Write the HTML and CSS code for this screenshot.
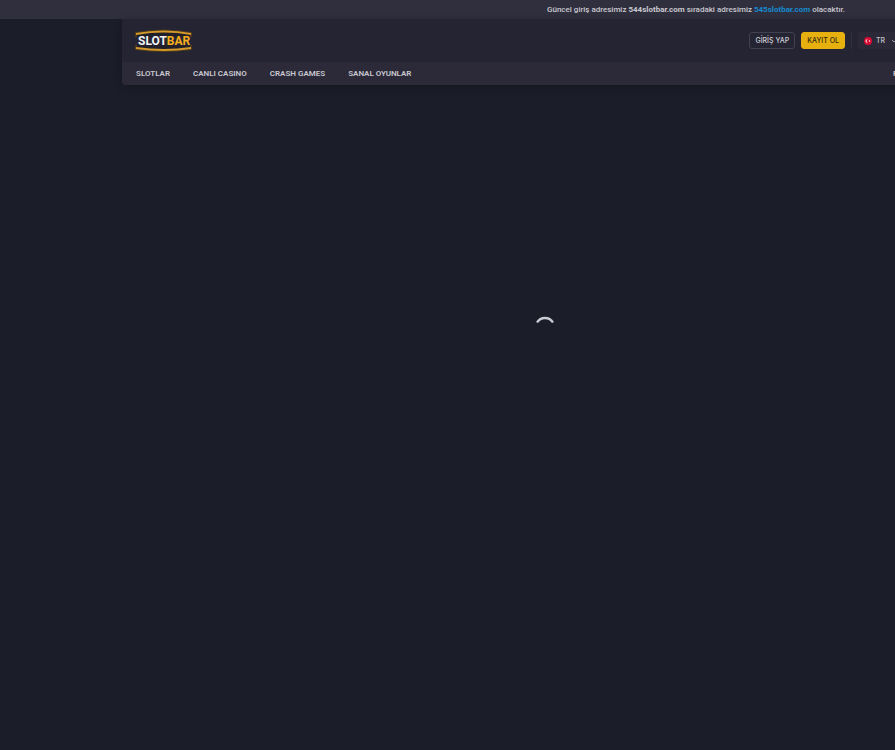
FILE: index.html
```html
<!DOCTYPE html>
<html lang="tr">
<head>
    <meta charset="UTF-8">
    <meta name="viewport" content="width=device-width, initial-scale=1.0">
    <title>Slotbar</title>
    <link rel="stylesheet" href="styles.css">
</head>
<body>
    <div class="page">
        <div class="announcement">
            <p>Güncel giriş adresimiz <strong>544slotbar.com</strong> sıradaki adresimiz <a href="#">545slotbar.com</a> olacaktır.</p>
        </div>

        <header class="header">
            <div class="header-top">
                <a class="logo" href="#" aria-label="Slotbar">
                    <svg width="58" height="24" viewBox="0 0 58 24">
                        <path d="M1 8V4Q29 -1 56 4V8M1 16V20Q29 24 56 20V16" fill="#211f27" stroke="#4d391c" stroke-width="2"/>
                        <path d="M1 5Q29 0 56 5M1 19Q29 23 56 19" fill="none" stroke="#d49a2b" stroke-width="2"/>
                        <text class="logo-text" x="3" y="16"><tspan fill="#f2f2f4">SLOT</tspan><tspan fill="#f7ae1c">BAR</tspan></text>
                    </svg>
                </a>

                <div class="actions">
                    <button class="btn btn-login" type="button">GİRİŞ YAP</button>
                    <button class="btn btn-register" type="button">KAYIT OL</button>
                    <span class="divider"></span>
                    <label class="language">
                        <svg width="8" height="8" viewBox="0 0 16 16">
                            <circle cx="8" cy="8" r="8" fill="#d80b35"/>
                            <path d="M8 4.6A3.6 3.6 0 1 0 8 11.4A2.9 3.4 0 1 1 8 4.6Z" fill="#fff"/>
                            <circle cx="11" cy="8" r="1.3" fill="#fff"/>
                        </svg>
                        <select aria-label="Dil">
                            <option>TR</option>
                        </select>
                        <svg width="6" height="4" viewBox="0 0 6 4">
                            <path d="M1 1L3 3L5 1" fill="none" stroke="#9b9ba5"/>
                        </svg>
                    </label>
                </div>
            </div>

            <nav class="nav">
                <a href="#">SLOTLAR</a>
                <a href="#">CANLI CASINO</a>
                <a href="#">CRASH GAMES</a>
                <a href="#">SANAL OYUNLAR</a>
                <a class="nav-last" href="#">PROMOSYONLAR</a>
            </nav>
        </header>

        <main class="content">
            <svg class="spinner" width="20" height="20" viewBox="0 0 20 20" role="img" aria-label="Yükleniyor">
                <path d="M2 7.5A9.3 9.3 0 0 1 18 7.5" fill="none" stroke="#c9cad2" stroke-width="2.4"/>
            </svg>
        </main>
    </div>
</body>
</html>
```
FILE: styles.css
```css
* {
    box-sizing: border-box;
}

body {
    margin: 0;
    background-color: #1b1d29;
    color: #c9c8d0;
    font-family: Roboto, sans-serif;
    font-size: 8px;
    overflow: hidden;
}

a {
    color: inherit;
    text-decoration: none;
}

/* desktop layout, narrower windows see its left part */
.page {
    display: flex;
    flex-direction: column;
    min-width: 1090px;
    min-height: 100vh;
}

.announcement {
    display: flex;
    justify-content: flex-end;
    align-items: center;
    height: 19px;
    padding-right: 245px;
    background-color: #302f3d;
    font-weight: 500;
}

.announcement p {
    margin: 0;
}

.announcement strong {
    font-weight: 700;
}

.announcement a {
    color: #168bd0;
    font-weight: 700;
}

.header {
    margin: 0 122px;
    background-color: #252432;
    border-radius: 0 0 4px 4px;
    box-shadow: 0 2px 8px rgba(0, 0, 0, 0.25);
    overflow: hidden;
}

.header-top {
    display: flex;
    justify-content: space-between;
    align-items: center;
    height: 43px;
    padding: 0 65px 0 13px;
}

.logo {
    display: flex;
}

.logo-text {
    font-family: Roboto, sans-serif;
    font-size: 12px;
    font-weight: 700;
}

.actions {
    display: flex;
    align-items: center;
    gap: 6px;
}

.btn {
    height: 17px;
    padding: 0 5px;
    border: 1px solid #424150;
    border-radius: 3px;
    background-color: transparent;
    color: #d2d1d8;
    font-family: Inter, sans-serif;
    font-size: 7px;
    font-weight: 500;
    cursor: pointer;
}

.btn-register {
    border-color: #e6b00f;
    background-color: #e6b00f;
    color: #352a10;
}

.divider {
    width: 1px;
    height: 17px;
    background-color: #303040;
}

.language {
    display: flex;
    align-items: center;
    gap: 4px;
    height: 17px;
    padding: 0 6px;
    border-radius: 3px;
    background-color: #2b2937;
}

.language select {
    appearance: none;
    width: 11px;
    padding: 0;
    border: 0;
    background-color: transparent;
    color: #c3c2ca;
    font-family: Inter, sans-serif;
    font-size: 7px;
    font-weight: 500;
}

.nav {
    display: flex;
    align-items: center;
    gap: 23px;
    height: 23px;
    padding: 0 11px 0 14px;
    background-color: #2c2a38;
    font-weight: 600;
}

.nav-last {
    margin-left: auto;
}

.content {
    display: flex;
    flex: 1;
    justify-content: center;
    padding-top: 230px;
}
```
